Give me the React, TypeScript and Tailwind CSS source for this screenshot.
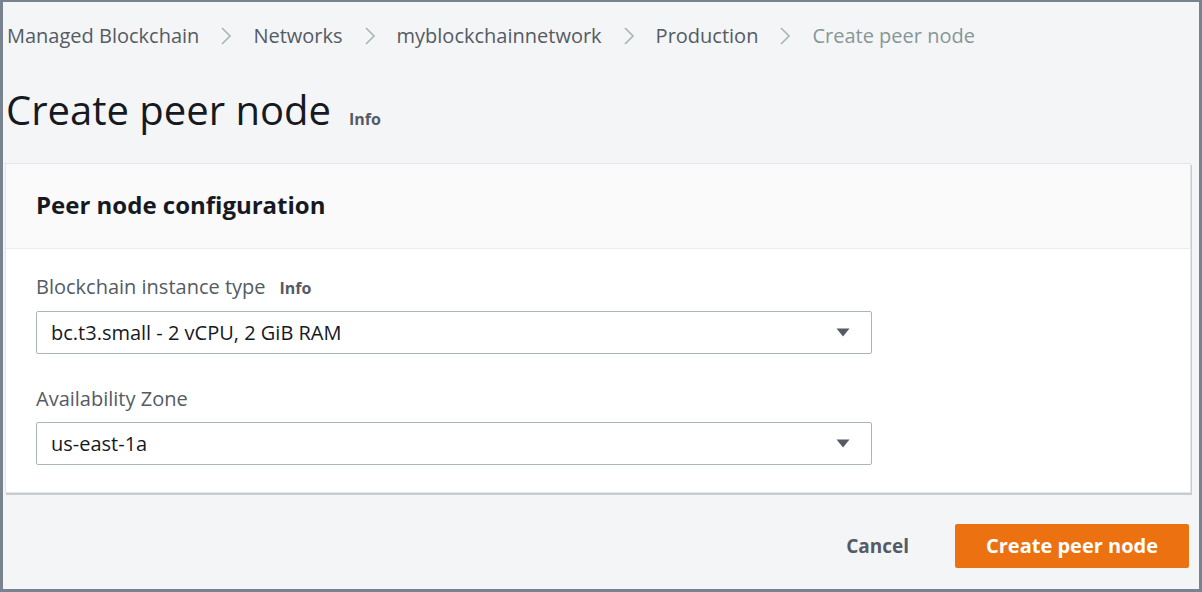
import { Fragment } from 'react';

const crumbs = ['Managed Blockchain', 'Networks', 'myblockchainnetwork', 'Production'];

const Chevron = () => (
  <svg width="12" height="20" viewBox="0 0 12 20" className="mx-[21px] text-[#aab7b8]">
    <path d="M2 2 L10 10 L2 18" fill="none" stroke="currentColor" strokeWidth="1.75" />
  </svg>
);

const Caret = () => (
  <svg width="14" height="9" viewBox="0 0 14 9">
    <path d="M0.5 0.5 H13.5 L7 8.5 Z" fill="#545b64" />
  </svg>
);

const SelectBox = ({ value }: { value: string }) => (
  <div className="flex items-center justify-between w-[836px] h-[43px] pl-[14px] pr-[21px] bg-white border border-[#aab7b8] rounded-[2px] text-[20px] leading-[24px] text-[#16191f]">
    <span>{value}</span>
    <Caret />
  </div>
);

export default function App() {
  return (
    <div
      className="w-[1202px] h-[592px] bg-[#f4f5f7] border-t-2 border-b-[3px] border-l-[3px] border-r-[3px] border-[#79838f] overflow-hidden"
      style={{ fontFamily: '"Open Sans", "Noto Sans", sans-serif' }}
    >
      {/* Breadcrumbs */}
      <nav className="flex items-center h-[34px] mt-[17px] pl-[4px] text-[20px] leading-[28px]">
        {crumbs.map((c) => (
          <Fragment key={c}>
            <span className="text-[#545b64]">{c}</span>
            <Chevron />
          </Fragment>
        ))}
        <span className="text-[#879596]">Create peer node</span>
      </nav>

      {/* Header */}
      <div className="flex items-baseline gap-[18px] mt-[33px] pl-[3px]">
        <h1 className="text-[40px] leading-[48px] text-[#16191f]">Create peer node</h1>
        <span className="text-[16px] font-bold text-[#545b64]">Info</span>
      </div>

      {/* Card */}
      <div className="mt-[29px] ml-[2px] w-[1186px] bg-white shadow-[1px_2px_0_#c6ccd2] border border-[#e1e4e8]">
        <div className="h-[85px] flex items-center px-[30px] bg-[#fafafa] border-b border-[#eaeded]">
          <h2 className="text-[24px] leading-[30px] font-bold text-[#16191f] -mt-[3px]">Peer node configuration</h2>
        </div>
        <div className="px-[30px] pt-[25px] pb-[27px] flex flex-col gap-[32px]">
          <div className="flex flex-col gap-[10px]">
            <div className="flex items-baseline gap-[14px] text-[20px] leading-[26px] text-[#545b64]">
              <span>Blockchain instance type</span>
              <span className="text-[16px] font-bold">Info</span>
            </div>
            <SelectBox value="bc.t3.small - 2 vCPU, 2 GiB RAM" />
          </div>
          <div className="flex flex-col gap-[10px]">
            <span className="text-[20px] leading-[26px] text-[#545b64]">Availability Zone</span>
            <SelectBox value="us-east-1a" />
          </div>
        </div>
      </div>

      {/* Actions */}
      <div className="flex justify-end items-center gap-[46px] mt-[31px] pr-[10px]">
        <button className="text-[19px] font-bold text-[#545b64]">Cancel</button>
        <button className="w-[234px] h-[44px] bg-[#ec7211] rounded-[2px] text-white text-[20px] font-bold">
          Create peer node
        </button>
      </div>
    </div>
  );
}
